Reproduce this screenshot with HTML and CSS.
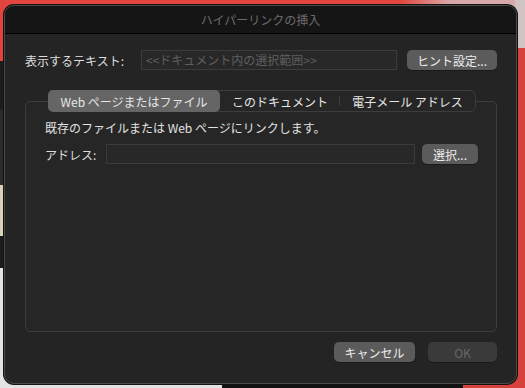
FILE: index.html
```html
<!DOCTYPE html>
<html lang="ja">
<head>
    <meta charset="UTF-8">
    <title>ハイパーリンクの挿入</title>
    <link rel="stylesheet" href="styles.css">
</head>
<body>
    <!-- Dialog window -->
    <div class="dialog">
        <div class="titlebar">ハイパーリンクの挿入</div>

        <div class="content">
            <!-- Display text row -->
            <div class="row display-row">
                <span class="label">表示するテキスト:</span>
                <div class="field display-field">&lt;&lt;ドキュメント内の選択範囲&gt;&gt;</div>
                <button class="btn hint-btn">ヒント設定...</button>
            </div>

            <!-- Link target tabs -->
            <div class="tabs">
                <div class="tab active">Web ページまたはファイル</div>
                <div class="tab">このドキュメント</div>
                <div class="tab last">電子メール アドレス</div>
            </div>

            <div class="group">
                <p class="hint">既存のファイルまたは Web ページにリンクします。</p>
                <div class="row address-row">
                    <span class="label">アドレス:</span>
                    <div class="field address-field"></div>
                    <button class="btn select-btn">選択...</button>
                </div>
            </div>

            <!-- Footer buttons -->
            <div class="footer">
                <button class="btn cancel-btn">キャンセル</button>
                <button class="btn ok-btn" disabled>OK</button>
            </div>
        </div>
    </div>
</body>
</html>
```

FILE: styles.css
```css
html, body {
    margin: 0;
    padding: 0;
}

body {
    width: 525px;
    height: 388px;
    overflow: hidden;
    box-sizing: border-box;
    padding: 5px 0 0 4px;
    font-family: "Noto Sans CJK JP", "Noto Sans", sans-serif;
    font-size: 12px;
    color: #dcdcdc;
    background-color: #e3e3e3;
    /* desktop behind the dialog */
    background:
        linear-gradient(to bottom, #e0443d 0 61px, #1d1d1d 61px 110px, #2a2a2a 110px 185px, #d9d1b9 185px 236px, #1c1c1c 236px 268px, #e3e3e3 268px) left top / 6px 100% no-repeat,
        linear-gradient(to right, #e3e3e3 0 222px, #121212 222px 463px, #d6423b 463px) left bottom / 100% 8px no-repeat,
        linear-gradient(to bottom, #cfc3c3 0 48px, #d6423b 48px) right top / 10px 100% no-repeat,
        linear-gradient(to right, #e2463f 0 400px, #d9a9a9 450px) left top / 100% 10px no-repeat,
        #e3e3e3;
}

.dialog {
    width: 513px;
    height: 379px;
    box-sizing: border-box;
    background-color: #242424;
    border: 1px solid #4a4a4a;
    border-radius: 10px;
    overflow: hidden;
    display: flex;
    flex-direction: column;
    box-shadow: 0 0 0 1px #111;
}

.titlebar {
    height: 27px;
    line-height: 27px;
    text-align: center;
    background-color: #151515;
    border-bottom: 1px solid #000;
    color: #6c6c6c;
    font-size: 12px;
    flex-shrink: 0;
}

.content {
    flex: 1;
    display: flex;
    flex-direction: column;
    padding: 16px 19px 0 20px;
}

.row {
    display: flex;
    align-items: center;
}

.label {
    color: #dedede;
    white-space: nowrap;
}

.field {
    box-sizing: border-box;
    height: 20px;
    line-height: 18px;
    background-color: #282828;
    border: 1px solid #3b3b3b;
    color: #5f5f5f;
    padding: 0 4px;
    white-space: nowrap;
}

.display-row .label {
    width: 116px;
}

.display-field {
    width: 256px;
}

.btn {
    font-family: inherit;
    font-size: 12px;
    height: 20px;
    padding: 0;
    border: none;
    border-radius: 5px;
    background-color: #5b5b5b;
    color: #ececec;
    box-shadow: 0 1px 0 rgba(0, 0, 0, 0.3);
}

.hint-btn {
    width: 90px;
    margin-left: 10px;
}

/* segmented control sitting on the group box border */
.tabs {
    align-self: center;
    margin: 20px 0 0 2px;
    display: flex;
    height: 22px;
    box-sizing: border-box;
    border: 1px solid #3d3d3d;
    border-radius: 6px;
    background-color: #262626;
    position: relative;
    z-index: 1;
    margin-bottom: -11px;
}

.tab {
    display: flex;
    align-items: center;
    justify-content: center;
    color: #e6e6e6;
    font-size: 12px;
    white-space: nowrap;
    position: relative;
}

.tab:nth-child(1) {
    width: 171px;
}

.tab:nth-child(2) {
    width: 120px;
}

.tab:nth-child(3) {
    width: 135px;
}

.tab.active {
    background-color: #656565;
    border-radius: 5px;
    margin: -1px 0 -1px -1px;
    width: 172px;
}

.tab:nth-child(2)::after {
    content: "";
    position: absolute;
    right: 0;
    top: 5px;
    bottom: 5px;
    width: 1px;
    background-color: #3e3e3e;
}

.group {
    height: 231px;
    box-sizing: border-box;
    border: 1px solid #3d3d3d;
    border-radius: 5px;
    background-color: #262626;
    padding: 17px 18px 0 19px;
}

.hint {
    margin: 0 0 8px 0;
    color: #e2e2e2;
}

.address-row .label {
    width: 61px;
}

.address-field {
    width: 309px;
    height: 20px;
}

.select-btn {
    width: 56px;
    margin-left: 7px;
}

.footer {
    display: flex;
    justify-content: flex-end;
    gap: 13px;
    margin-top: 10px;
}

.cancel-btn {
    width: 81px;
}

.ok-btn {
    width: 69px;
    background-color: #3a3a3a;
    color: #676767;
}
```
